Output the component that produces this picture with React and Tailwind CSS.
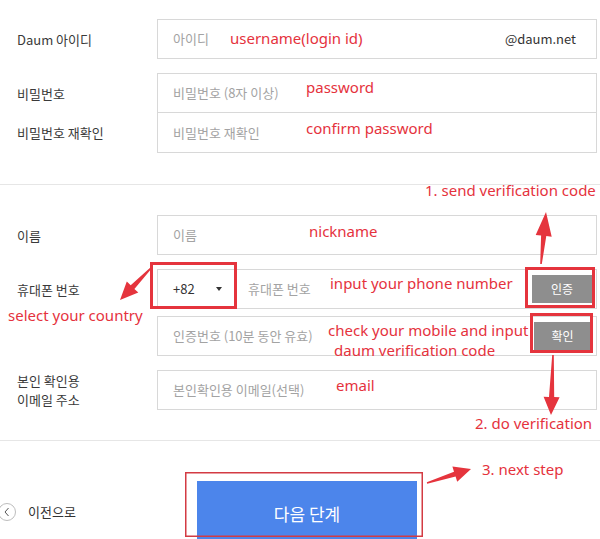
import React from 'react';

const RED = '#e5343d';

// polygon for a tapered arrow from (x1,y1) to tip (x2,y2)
const arrowPoints = (x1, y1, x2, y2, hl = 18, hw = 8, t0 = 0.8, t1 = 2.6) => {
  const dx = x2 - x1;
  const dy = y2 - y1;
  const len = Math.hypot(dx, dy);
  const ux = dx / len;
  const uy = dy / len;
  const px = -uy;
  const py = ux;
  const bx = x2 - ux * hl;
  const by = y2 - uy * hl;
  const pts = [
    [x1 + px * t0, y1 + py * t0],
    [bx + px * t1, by + py * t1],
    [bx + px * hw, by + py * hw],
    [x2, y2],
    [bx - px * hw, by - py * hw],
    [bx - px * t1, by - py * t1],
    [x1 - px * t0, y1 - py * t0],
  ];
  return pts.map(([a, b]) => `${a.toFixed(1)},${b.toFixed(1)}`).join(' ');
};

const Field = ({ children, className = '' }) => (
  <div className={`flex h-[40px] w-[440px] items-center border border-[#d8d8d8] bg-white ${className}`}>
    {children}
  </div>
);

const Placeholder = ({ children }) => (
  <span className="pl-[15px] text-[13px] text-[#a3a3a3]">{children}</span>
);

const Label = ({ children }) => (
  <div className="w-[157px] shrink-0 pl-[17px] text-[13px] leading-[19px] text-[#3a3a3a]">{children}</div>
);

const Note = ({ top, left, children }) => (
  <span
    className="absolute whitespace-nowrap font-['Noto_Sans',sans-serif] text-[15px] leading-[20px] text-[#e5323d]"
    style={{ top, left }}
  >
    {children}
  </span>
);

export default function App() {
  return (
    <div className="relative h-[539px] w-[600px] overflow-hidden bg-white font-['Noto_Sans_CJK_KR',sans-serif]">
      {/* account section */}
      <div className="pt-[19px]">
        <div className="flex items-center">
          <Label>Daum 아이디</Label>
          <Field className="justify-between">
            <Placeholder>아이디</Placeholder>
            <span className="pr-[20px] text-[13px] text-[#333]">@daum.net</span>
          </Field>
        </div>

        <div className="mt-[14px] flex">
          <div className="flex flex-col">
            <div className="flex h-[40px] items-center"><Label>비밀번호</Label></div>
            <div className="flex h-[39px] items-center"><Label>비밀번호 재확인</Label></div>
          </div>
          <div className="flex flex-col">
            <Field><Placeholder>비밀번호 (8자 이상)</Placeholder></Field>
            <Field className="h-[39px] border-t-0"><Placeholder>비밀번호 재확인</Placeholder></Field>
          </div>
        </div>
      </div>

      <div className="mt-[31px] h-px bg-[#e6e6e6]" />

      {/* personal section */}
      <div className="pt-[30px]">
        <div className="flex items-center">
          <Label>이름</Label>
          <Field><Placeholder>이름</Placeholder></Field>
        </div>

        <div className="mt-[14px] flex items-center">
          <Label>휴대폰 번호</Label>
          <Field>
            <div className="flex w-[75px] items-center justify-between pl-[15px] pr-[11px]">
              <span className="text-[13px] text-[#333]">+82</span>
              <span className="h-0 w-0 border-x-[3.5px] border-t-[4px] border-x-transparent border-t-[#333]" />
            </div>
            <Placeholder>휴대폰 번호</Placeholder>
            <button className="ml-auto mr-[4px] h-[28px] w-[60px] bg-[#8e8e8e] text-[12px] text-white">인증</button>
          </Field>
        </div>

        <div className="mt-[7px] flex items-center">
          <Label />
          <Field>
            <Placeholder>인증번호 (10분 동안 유효)</Placeholder>
            <button className="ml-auto mr-[5px] h-[29px] w-[57px] bg-[#8e8e8e] text-[12px] text-white">확인</button>
          </Field>
        </div>

        <div className="mt-[14px] flex items-center">
          <Label>
            본인 확인용
            <br />
            이메일 주소
          </Label>
          <Field><Placeholder>본인확인용 이메일(선택)</Placeholder></Field>
        </div>
      </div>

      <div className="mt-[30px] h-px bg-[#e6e6e6]" />

      {/* footer */}
      <div className="mt-[40px] flex items-start">
        <div className="flex w-[197px] items-center pt-[21px]">
          <span className="-ml-[2px] flex h-[18px] w-[18px] items-center justify-center rounded-full border border-[#bdbdbd]">
            <svg width="8" height="10" viewBox="0 0 8 10" fill="none">
              <polyline points="5.5,1 2,5 5.5,9" stroke="#555" strokeWidth="1" />
            </svg>
          </span>
          <span className="ml-[12px] text-[13px] text-[#333]">이전으로</span>
        </div>
        <button className="h-[70px] w-[220px] bg-[#4c85eb] pb-[4px] text-[17px] text-white">다음 단계</button>
      </div>

      {/* annotations */}
      <svg className="pointer-events-none absolute left-0 top-0" width="600" height="539" viewBox="0 0 600 539">
        <rect x="151.5" y="263.5" width="84" height="44" fill="none" stroke={RED} strokeWidth="3" />
        <rect x="526.5" y="268.5" width="67" height="38" fill="none" stroke={RED} strokeWidth="3" />
        <rect x="531.5" y="314.5" width="60" height="37" fill="none" stroke={RED} strokeWidth="3" />
        <rect x="185.75" y="472.75" width="236.5" height="63.5" fill="none" stroke="#d33b43" strokeWidth="1.5" />
        <polygon points={arrowPoints(541, 264, 546, 212, 24, 8)} fill={RED} />
        <polygon points={arrowPoints(553, 355, 551, 415, 18, 8)} fill={RED} />
        <polygon points={arrowPoints(151, 268, 120, 300, 18, 8)} fill={RED} />
        <polygon points={arrowPoints(427, 483, 471, 469, 17, 8)} fill={RED} />
      </svg>

      <Note top={28} left={230}>username(login id)</Note>
      <Note top={77} left={306}>password</Note>
      <Note top={118} left={306}>confirm password</Note>
      <Note top={180} left={425}>1. send verification code</Note>
      <Note top={221} left={309}>nickname</Note>
      <Note top={273} left={330}>input your phone number</Note>
      <Note top={305} left={8}>select your country</Note>
      <Note top={320} left={328}>check your mobile and input</Note>
      <Note top={340} left={334}>daum verification code</Note>
      <Note top={375} left={336}>email</Note>
      <Note top={413} left={475}>2. do verification</Note>
      <Note top={459} left={482}>3. next step</Note>
    </div>
  );
}
